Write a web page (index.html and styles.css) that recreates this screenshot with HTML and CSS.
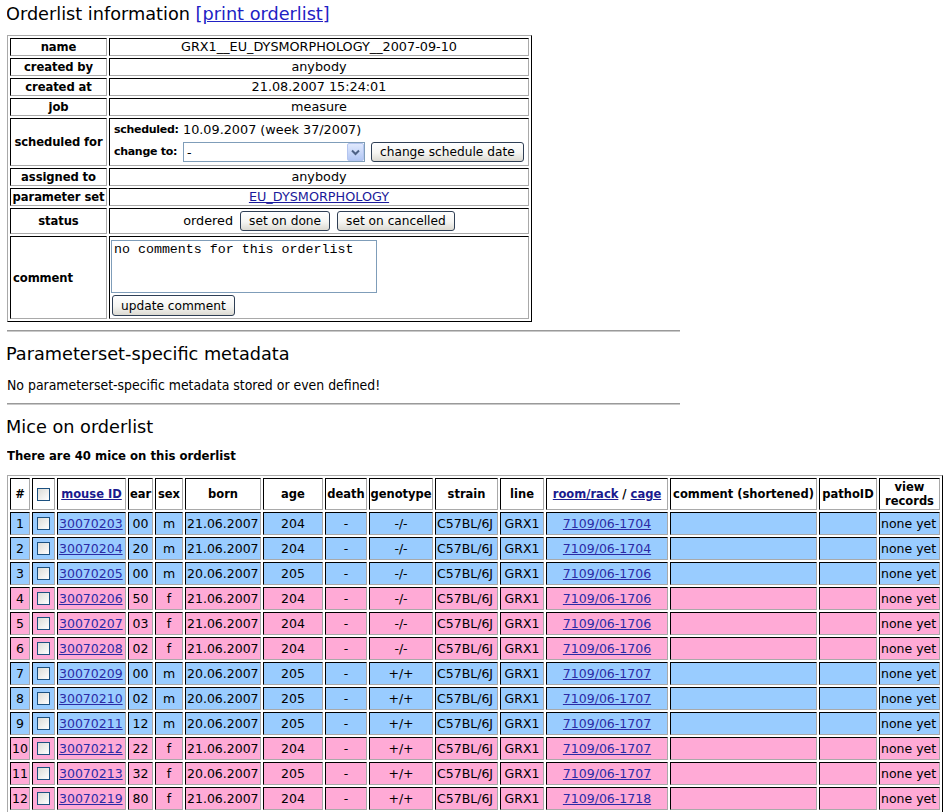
FILE: index.html
```html
<!DOCTYPE html>
<html>
<head>
<meta charset="utf-8">
<title>Orderlist information</title>
<link rel="stylesheet" href="styles.css">
</head>
<body>
<div class="title">Orderlist information <a href="#">[print orderlist]</a></div>

<table class="info">
  <tr><th>name</th><td>GRX1__EU_DYSMORPHOLOGY__2007-09-10</td></tr>
  <tr><th>created by</th><td>anybody</td></tr>
  <tr><th>created at</th><td>21.08.2007 15:24:01</td></tr>
  <tr><th>job</th><td>measure</td></tr>
  <tr>
    <th>scheduled for</th>
    <td class="sched">
      <div class="sched-line"><b class="k">scheduled:</b><span>10.09.2007 (week 37/2007)</span></div>
      <div class="sched-line ctrl">
        <b class="k">change to:</b>
        <span class="combo">
          <select class="sel"><option>-</option></select>
          <span class="combo-btn"><svg width="9" height="7" viewBox="0 0 9 7"><path d="M1 1.5 L4.5 5 L8 1.5" fill="none" stroke="#4d6185" stroke-width="2"/></svg></span>
        </span>
        <button class="btn">change schedule date</button>
      </div>
    </td>
  </tr>
  <tr><th>assigned to</th><td>anybody</td></tr>
  <tr><th>parameter set</th><td><a href="#">EU_DYSMORPHOLOGY</a></td></tr>
  <tr>
    <th>status</th>
    <td class="status"><span>ordered</span><button class="btn">set on done</button><button class="btn">set on cancelled</button></td>
  </tr>
  <tr>
    <th class="left">comment</th>
    <td class="comment">
      <textarea class="ta">no comments for this orderlist</textarea>
      <button class="btn">update comment</button>
    </td>
  </tr>
</table>

<hr class="rule">
<div class="heading">Parameterset-specific metadata</div>
<p class="note">No parameterset-specific metadata stored or even defined!</p>
<hr class="rule rule2">
<div class="heading">Mice on orderlist</div>
<p class="count">There are 40 mice on this orderlist</p>

<table class="mice">
  <tr>
    <th class="c-n">#</th>
    <th class="c-cb"><input type="checkbox" class="cb"></th>
    <th class="c-id"><a href="#">mouse ID</a></th>
    <th class="c-ear">ear</th>
    <th class="c-sex">sex</th>
    <th class="c-born">born</th>
    <th class="c-age">age</th>
    <th class="c-death">death</th>
    <th class="c-gen">genotype</th>
    <th class="c-strain">strain</th>
    <th class="c-line">line</th>
    <th class="c-room"><a href="#">room/rack</a> / <a href="#">cage</a></th>
    <th class="c-com">comment (shortened)</th>
    <th class="c-patho">pathoID</th>
    <th class="c-view">view<br>records</th>
  </tr>
  <tr class="m"><td class="ctr">1</td><td class="ctr"><input type="checkbox" class="cb"></td><td><a href="#">30070203</a></td><td class="ctr">00</td><td class="ctr">m</td><td>21.06.2007</td><td class="ctr">204</td><td class="ctr">-</td><td class="ctr">-/-</td><td>C57BL/6J</td><td class="ctr">GRX1</td><td class="ctr"><a href="#">7109/06-1704</a></td><td></td><td></td><td>none yet</td></tr>
  <tr class="m"><td class="ctr">2</td><td class="ctr"><input type="checkbox" class="cb"></td><td><a href="#">30070204</a></td><td class="ctr">20</td><td class="ctr">m</td><td>21.06.2007</td><td class="ctr">204</td><td class="ctr">-</td><td class="ctr">-/-</td><td>C57BL/6J</td><td class="ctr">GRX1</td><td class="ctr"><a href="#">7109/06-1704</a></td><td></td><td></td><td>none yet</td></tr>
  <tr class="m"><td class="ctr">3</td><td class="ctr"><input type="checkbox" class="cb"></td><td><a href="#">30070205</a></td><td class="ctr">00</td><td class="ctr">m</td><td>20.06.2007</td><td class="ctr">205</td><td class="ctr">-</td><td class="ctr">-/-</td><td>C57BL/6J</td><td class="ctr">GRX1</td><td class="ctr"><a href="#">7109/06-1706</a></td><td></td><td></td><td>none yet</td></tr>
  <tr class="f"><td class="ctr">4</td><td class="ctr"><input type="checkbox" class="cb"></td><td><a href="#">30070206</a></td><td class="ctr">50</td><td class="ctr">f</td><td>21.06.2007</td><td class="ctr">204</td><td class="ctr">-</td><td class="ctr">-/-</td><td>C57BL/6J</td><td class="ctr">GRX1</td><td class="ctr"><a href="#">7109/06-1706</a></td><td></td><td></td><td>none yet</td></tr>
  <tr class="f"><td class="ctr">5</td><td class="ctr"><input type="checkbox" class="cb"></td><td><a href="#">30070207</a></td><td class="ctr">03</td><td class="ctr">f</td><td>21.06.2007</td><td class="ctr">204</td><td class="ctr">-</td><td class="ctr">-/-</td><td>C57BL/6J</td><td class="ctr">GRX1</td><td class="ctr"><a href="#">7109/06-1706</a></td><td></td><td></td><td>none yet</td></tr>
  <tr class="f"><td class="ctr">6</td><td class="ctr"><input type="checkbox" class="cb"></td><td><a href="#">30070208</a></td><td class="ctr">02</td><td class="ctr">f</td><td>21.06.2007</td><td class="ctr">204</td><td class="ctr">-</td><td class="ctr">-/-</td><td>C57BL/6J</td><td class="ctr">GRX1</td><td class="ctr"><a href="#">7109/06-1706</a></td><td></td><td></td><td>none yet</td></tr>
  <tr class="m"><td class="ctr">7</td><td class="ctr"><input type="checkbox" class="cb"></td><td><a href="#">30070209</a></td><td class="ctr">00</td><td class="ctr">m</td><td>20.06.2007</td><td class="ctr">205</td><td class="ctr">-</td><td class="ctr">+/+</td><td>C57BL/6J</td><td class="ctr">GRX1</td><td class="ctr"><a href="#">7109/06-1707</a></td><td></td><td></td><td>none yet</td></tr>
  <tr class="m"><td class="ctr">8</td><td class="ctr"><input type="checkbox" class="cb"></td><td><a href="#">30070210</a></td><td class="ctr">02</td><td class="ctr">m</td><td>20.06.2007</td><td class="ctr">205</td><td class="ctr">-</td><td class="ctr">+/+</td><td>C57BL/6J</td><td class="ctr">GRX1</td><td class="ctr"><a href="#">7109/06-1707</a></td><td></td><td></td><td>none yet</td></tr>
  <tr class="m"><td class="ctr">9</td><td class="ctr"><input type="checkbox" class="cb"></td><td><a href="#">30070211</a></td><td class="ctr">12</td><td class="ctr">m</td><td>20.06.2007</td><td class="ctr">205</td><td class="ctr">-</td><td class="ctr">+/+</td><td>C57BL/6J</td><td class="ctr">GRX1</td><td class="ctr"><a href="#">7109/06-1707</a></td><td></td><td></td><td>none yet</td></tr>
  <tr class="f"><td class="ctr">10</td><td class="ctr"><input type="checkbox" class="cb"></td><td><a href="#">30070212</a></td><td class="ctr">22</td><td class="ctr">f</td><td>21.06.2007</td><td class="ctr">204</td><td class="ctr">-</td><td class="ctr">+/+</td><td>C57BL/6J</td><td class="ctr">GRX1</td><td class="ctr"><a href="#">7109/06-1707</a></td><td></td><td></td><td>none yet</td></tr>
  <tr class="f"><td class="ctr">11</td><td class="ctr"><input type="checkbox" class="cb"></td><td><a href="#">30070213</a></td><td class="ctr">32</td><td class="ctr">f</td><td>20.06.2007</td><td class="ctr">205</td><td class="ctr">-</td><td class="ctr">+/+</td><td>C57BL/6J</td><td class="ctr">GRX1</td><td class="ctr"><a href="#">7109/06-1707</a></td><td></td><td></td><td>none yet</td></tr>
  <tr class="f"><td class="ctr">12</td><td class="ctr"><input type="checkbox" class="cb"></td><td><a href="#">30070219</a></td><td class="ctr">80</td><td class="ctr">f</td><td>21.06.2007</td><td class="ctr">204</td><td class="ctr">-</td><td class="ctr">+/+</td><td>C57BL/6J</td><td class="ctr">GRX1</td><td class="ctr"><a href="#">7109/06-1718</a></td><td></td><td></td><td>none yet</td></tr>
</table>
</body>
</html>
```
FILE: styles.css
```css
html {
  overflow: hidden;
}
body {
  margin: 4px 0 0 7px;
  font-family: "DejaVu Sans", Verdana, sans-serif;
  color: #000;
  background: #fff;
}
a {
  color: #1e1eb0;
}

.title {
  font-size: 17.7px;
  line-height: 20px;
  margin: 0 0 11px -1px;
}
.title a {
  color: #2121c4;
}

/* ---------- info table ---------- */
.info {
  border-collapse: separate;
  border-spacing: 2px;
  border: 1px solid;
  border-color: #a9a9a9 #000 #000 #a9a9a9;
  width: 525px;
}
.info th,
.info td {
  box-sizing: border-box;
  border: 1px solid;
  border-color: #000 #a9a9a9 #a9a9a9 #000;
  padding: 1px;
  line-height: 14px;
  text-align: center;
  vertical-align: middle;
}
.info th {
  width: 97px;
  font-size: 11.6px;
  font-weight: bold;
  white-space: nowrap;
  letter-spacing: -0.1px;
}
.info th.left {
  text-align: left;
  padding-left: 2px;
}
.info td {
  font-size: 12.8px;
}
.info td a {
  color: #1a1a9a;
}

.info td.sched {
  text-align: left;
  padding: 4px 4px 3px 4px;
}
.sched-line {
  display: flex;
  align-items: center;
}
.sched-line.ctrl {
  margin-top: 5px;
}
.k {
  display: inline-block;
  width: 69px;
  font-size: 11px;
  font-weight: bold;
  letter-spacing: -0.3px;
  flex: none;
}
.combo {
  position: relative;
  display: inline-block;
  width: 182px;
  height: 20px;
  margin-right: 6px;
}
.sel {
  -webkit-appearance: none;
  appearance: none;
  box-sizing: border-box;
  width: 182px;
  height: 20px;
  margin: 0;
  border: 1px solid #7f9db9;
  border-radius: 0;
  background: #fff;
  font-family: "DejaVu Sans", sans-serif;
  font-size: 12.5px;
  padding: 0 0 0 3px;
  color: #000;
}
.combo-btn {
  position: absolute;
  right: 1px;
  top: 1px;
  width: 17px;
  height: 18px;
  box-sizing: border-box;
  border: 1px solid #b4c5ef;
  border-radius: 2px;
  background: linear-gradient(#e0e9fd, #b3c7f4);
  display: flex;
  align-items: center;
  justify-content: center;
}

.btn {
  box-sizing: border-box;
  height: 20px;
  margin: 0;
  padding: 0 8px;
  border: 1px solid #2f3f55;
  border-radius: 3px;
  background: linear-gradient(#ffffff, #f5f5f2 55%, #dcdad2);
  font-family: "DejaVu Sans", sans-serif;
  font-size: 12.2px;
  line-height: 16px;
  color: #000;
}

.info td.status {
  padding: 2px 1px;
}
.status {
  text-align: center;
}
.status span {
  margin-right: 7px;
}
.status .btn {
  margin-right: 7px;
}
.status .btn:last-child {
  margin-right: 0;
}

.info td.comment {
  text-align: left;
  padding: 3px 1px 2px 1px;
}
.ta {
  display: block;
  box-sizing: border-box;
  width: 266px;
  height: 53px;
  margin: 0 0 2px 0;
  padding: 1px 2px;
  border: 1px solid #7f9db9;
  font-family: "Liberation Mono", "Courier New", monospace;
  font-size: 13.3px;
  line-height: 15px;
  resize: none;
  color: #000;
}
.comment .btn {
  display: block;
  height: 21px;
  margin-left: 1px;
}

/* ---------- rules and headings ---------- */
.rule {
  width: 673px;
  height: 0;
  margin: 8px 0 0 0;
  border: 0;
  border-top: 1px solid #9a9a9a;
  border-bottom: 1px solid #c9c9c9;
}
.rule2 {
  margin-top: 11px;
}
.heading {
  font-size: 17.7px;
  line-height: 20px;
  margin: 12px 0 0 -1px;
}
.note {
  font-family: "DejaVu Sans Condensed", "DejaVu Sans", sans-serif;
  font-stretch: condensed;
  font-size: 13.9px;
  line-height: 14px;
  margin: 14px 0 0 0;
}
.count {
  font-size: 11.7px;
  font-weight: bold;
  line-height: 14px;
  margin: 12px 0 0 0;
}

/* ---------- mice table ---------- */
.mice {
  border-collapse: separate;
  border-spacing: 2px;
  border: 1px solid;
  border-color: #a9a9a9 #000 #000 #a9a9a9;
  width: 936px;
  table-layout: fixed;
  margin-top: 12px;
}
.mice th,
.mice td {
  box-sizing: border-box;
  border: 1px solid;
  border-color: #000 #a9a9a9 #a9a9a9 #000;
  white-space: nowrap;
  overflow: hidden;
  vertical-align: middle;
}
.mice th {
  font-size: 11.5px;
  font-weight: bold;
  line-height: 14px;
  padding: 1px 0;
  text-align: center;
  background: #fff;
}
.mice th a {
  color: #1a1a8e;
}
.mice td {
  font-size: 12.5px;
  line-height: 15px;
  padding: 3px 1px;
  text-align: left;
}
.mice td.ctr {
  text-align: center;
}
.mice td a {
  color: #2b2ba6;
}
.mice tr.m td {
  background: #99ccff;
}
.mice tr.f td {
  background: #ffaad6;
}

.c-n { width: 20px; }
.c-cb { width: 23px; }
.c-id { width: 69px; }
.c-ear { width: 25px; }
.c-sex { width: 28px; }
.c-born { width: 76px; }
.c-age { width: 60px; }
.c-death { width: 42px; }
.c-gen { width: 64px; }
.c-strain { width: 63px; }
.c-line { width: 44px; }
.c-room { width: 122px; }
.c-com { width: 147px; }
.c-patho { width: 58px; }
.c-view { width: 61px; }

.cb {
  -webkit-appearance: none;
  appearance: none;
  display: block;
  box-sizing: border-box;
  width: 13px;
  height: 13px;
  margin: 0 auto;
  border: 1px solid #1c5180;
  border-radius: 0;
  background: linear-gradient(135deg, #dcdcd7, #ffffff);
}
```
